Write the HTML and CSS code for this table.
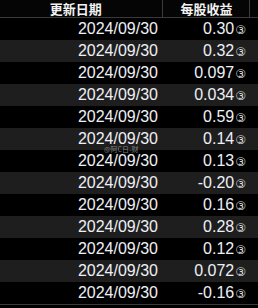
FILE: index.html
```html
<!DOCTYPE html>
<html>
<head>
<meta charset="utf-8">
<link rel="stylesheet" href="styles.css">
</head>
<body>
<div class="wrap">
<table class="grid">
<colgroup><col class="w-date"><col class="w-eps"><col class="w-more"></colgroup>
<thead>
<tr><th class="c-date">更新日期</th><th class="c-eps">每股收益</th><th class="c-more">每股</th></tr>
</thead>
<tbody>
<tr><td class="c-date">2024/09/30</td><td class="c-eps">0.30<span class="q">③</span></td><td></td></tr>
<tr><td class="c-date">2024/09/30</td><td class="c-eps">0.32<span class="q">③</span></td><td></td></tr>
<tr><td class="c-date">2024/09/30</td><td class="c-eps">0.097<span class="q">③</span></td><td></td></tr>
<tr><td class="c-date">2024/09/30</td><td class="c-eps">0.034<span class="q">③</span></td><td></td></tr>
<tr><td class="c-date">2024/09/30</td><td class="c-eps">0.59<span class="q">③</span></td><td></td></tr>
<tr><td class="c-date">2024/09/30</td><td class="c-eps">0.14<span class="q">③</span></td><td></td></tr>
<tr><td class="c-date">2024/09/30</td><td class="c-eps">0.13<span class="q">③</span></td><td></td></tr>
<tr><td class="c-date">2024/09/30</td><td class="c-eps">-0.20<span class="q">③</span></td><td></td></tr>
<tr><td class="c-date">2024/09/30</td><td class="c-eps">0.16<span class="q">③</span></td><td></td></tr>
<tr><td class="c-date">2024/09/30</td><td class="c-eps">0.28<span class="q">③</span></td><td></td></tr>
<tr><td class="c-date">2024/09/30</td><td class="c-eps">0.12<span class="q">③</span></td><td></td></tr>
<tr><td class="c-date">2024/09/30</td><td class="c-eps">0.072<span class="q">③</span></td><td></td></tr>
<tr><td class="c-date">2024/09/30</td><td class="c-eps">-0.16<span class="q">③</span></td><td></td></tr>
</tbody>
</table>
<div class="mark">@阿C日-财</div>
</div>
</body>
</html>
```
FILE: styles.css
```css
html, body {
  margin: 0;
  padding: 0;
  background: #000;
  overflow: hidden;
}
.wrap {
  position: relative;
  width: 258px;
  height: 308px;
  overflow: hidden;
}
.grid {
  border-collapse: collapse;
  table-layout: fixed;
  width: 300px;
  font-family: "Liberation Sans", Arial, "Noto Sans CJK SC", sans-serif;
  color: #eef0f6;
}
.w-date { width: 162px; }
.w-eps { width: 87px; }
.w-more { width: 51px; }
.grid th {
  height: 17px;
  padding: 0;
  font-size: 13px;
  font-weight: bold;
  color: #f2f2f2;
  text-align: center;
  background: #050505;
  border-bottom: 1px solid #3a3a3a;
  border-right: 1px solid #3a3a3a;
  line-height: 17px;
  font-family: "Noto Sans CJK SC", sans-serif;
  white-space: nowrap;
}
.grid th.c-date { padding-right: 10px; }
.grid th.c-eps { padding-left: 2px; }
.grid td {
  height: 22px;
  padding: 0;
  font-size: 16px;
  line-height: 22px;
  text-align: right;
  white-space: nowrap;
  overflow: hidden;
}
.grid tbody tr:nth-child(odd) td { background: #000; }
.grid tbody tr:nth-child(even) td { background: #1e1e1e; }
.grid tbody tr:last-child td { border-bottom: 1px solid #3a3a3a; }
.grid td.c-date { padding-right: 4px; }
.grid td.c-eps { padding-right: 3px; }
.q {
  font-family: "DejaVu Sans", sans-serif;
  font-size: 12px;
  line-height: 0;
  color: #dcdcdc;
  margin-left: 1px;
  vertical-align: 0;
}
.mark {
  position: absolute;
  left: 104px;
  top: 144px;
  font-family: "Noto Sans CJK SC", sans-serif;
  font-size: 7px;
  color: #9a9a9a;
  opacity: 0.8;
}
```
